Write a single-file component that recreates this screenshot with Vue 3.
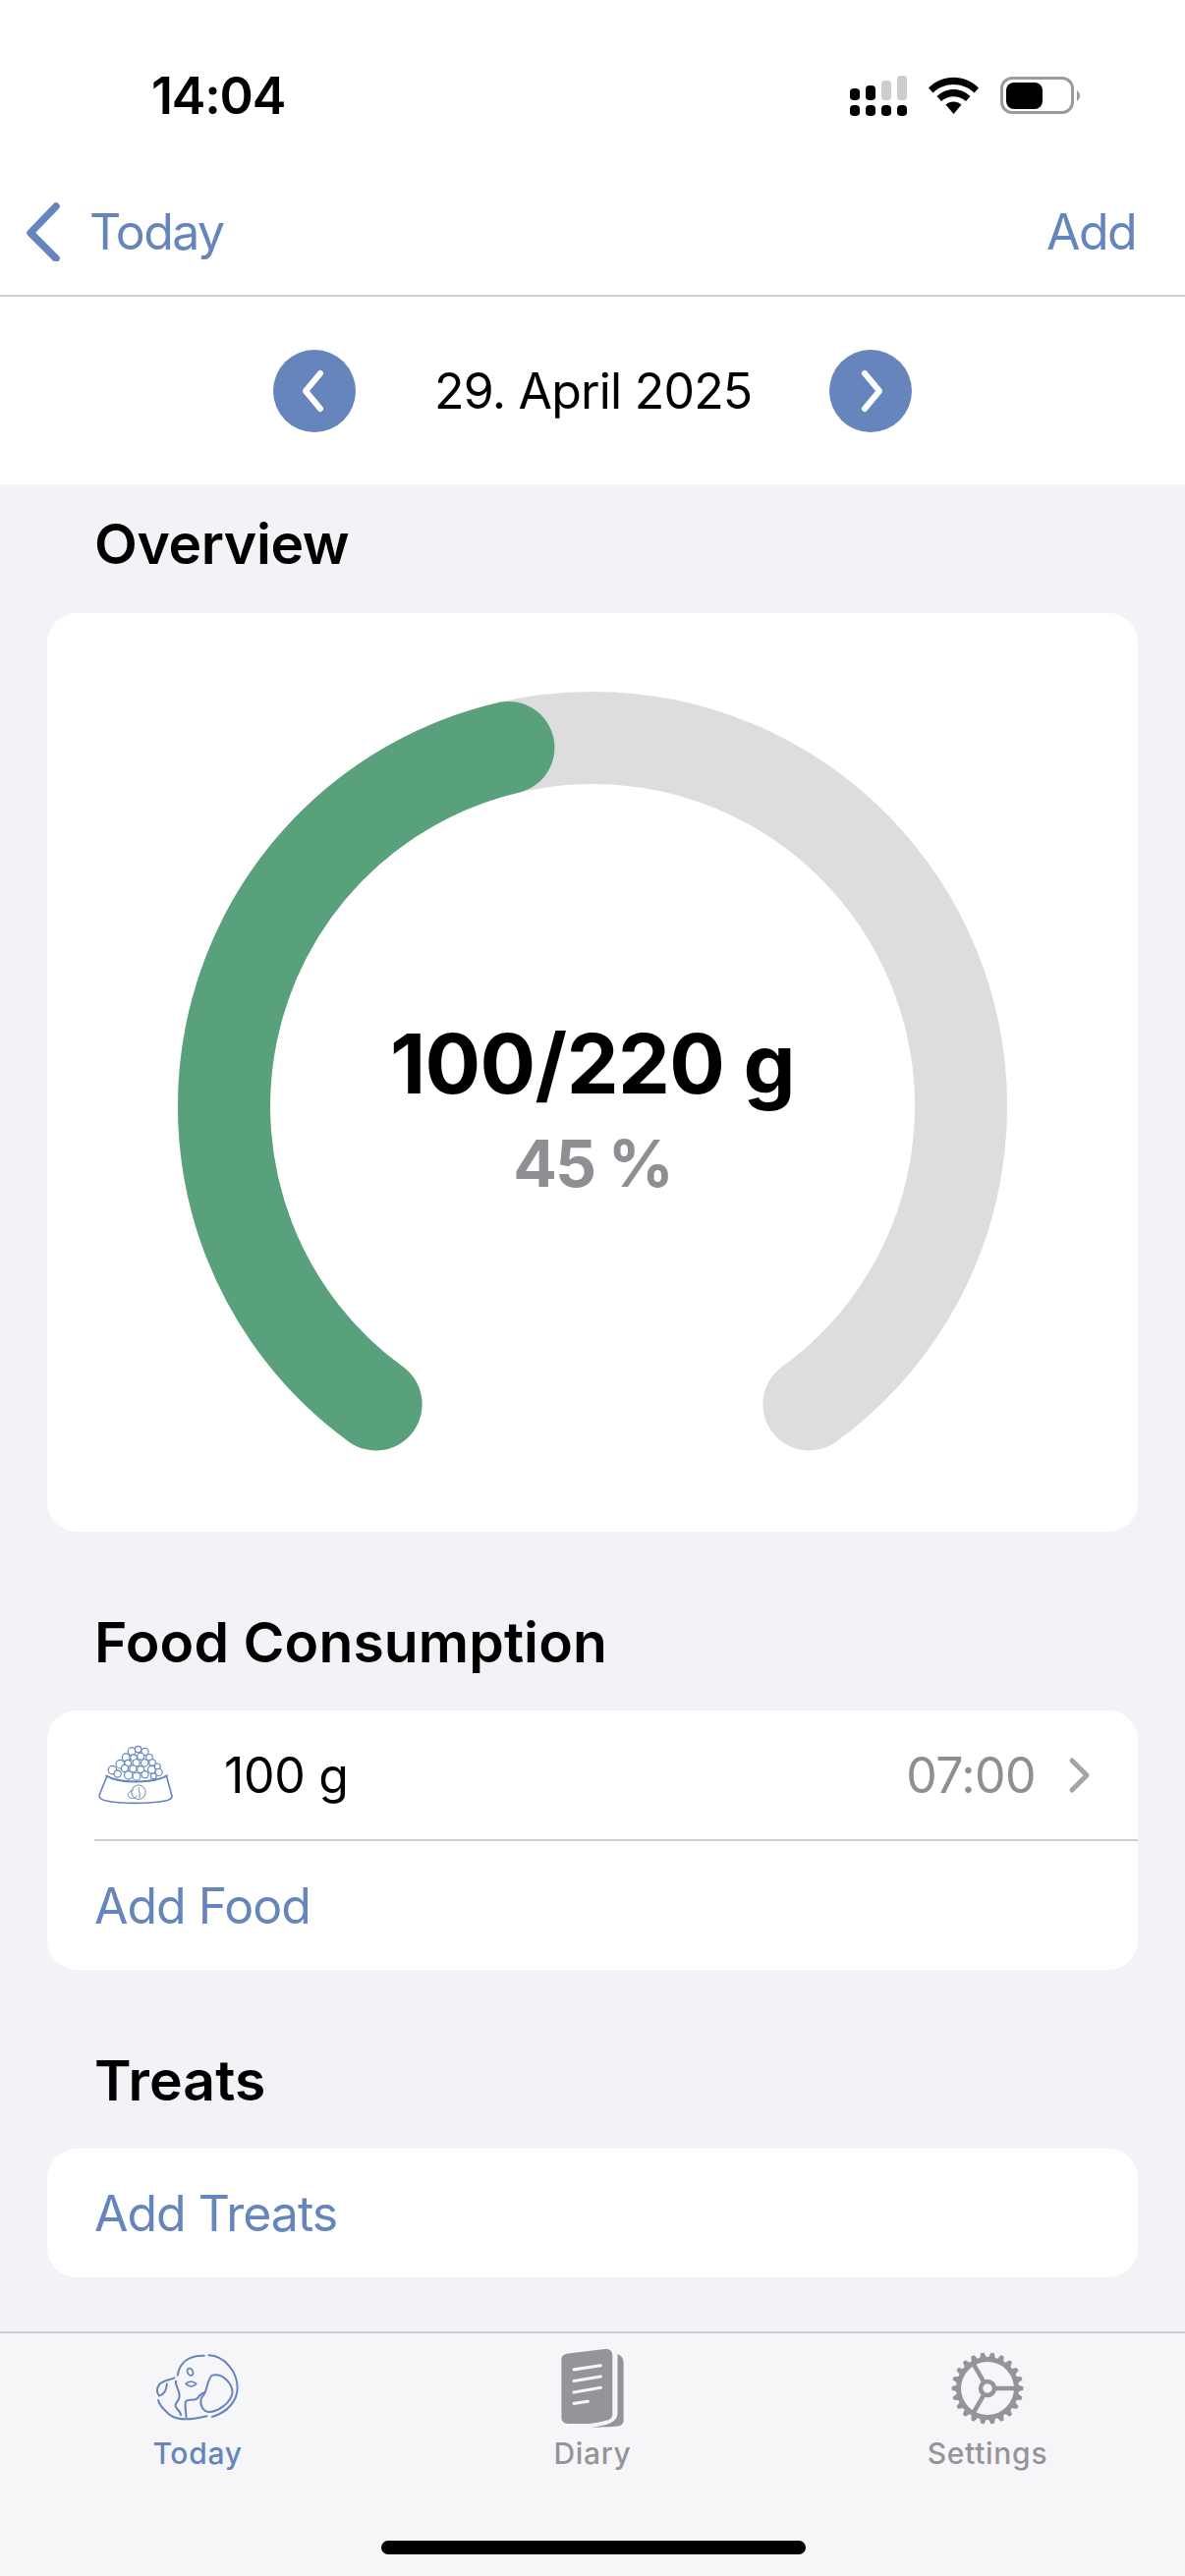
<template>
	<div class="screen">
		<!-- Top white area -->
		<header class="top">
			<div class="status">
				<span class="time">14:04</span>
				<svg class="status-icons" width="240" height="44" viewBox="860 75 240 44">
					<rect v-for="x in [865, 881, 897, 913]" :key="x" :x="x" y="107" width="10" height="11" rx="4" fill="#000" />
					<rect x="865" y="90" width="10" height="12" rx="4" fill="#000" />
					<rect x="881" y="87" width="10" height="15" rx="4" fill="#000" />
					<rect x="897" y="82" width="10" height="20" rx="3.500" fill="#cdcdcd" />
					<rect x="913" y="77" width="10" height="25" rx="3.500" fill="#cdcdcd" />
					<path d="M945 89.500C959 75 982 75 996 89.500L991.500 94.500C980 83 961 83 949.500 94.500Z" fill="#000" />
					<path d="M953.500 98C963 88.500 978 88.500 987.500 98L983 103C976 96.500 965 96.500 958 103Z" fill="#000" />
					<path d="M962.500 106.500C967 102.500 974 102.500 978.500 106.500L970.500 116Z" fill="#000" />
					<rect x="1019.500" y="79.500" width="72" height="35" rx="10.500" fill="none" stroke="#9b9b9b" stroke-width="3" />
					<rect x="1024" y="84" width="37" height="27" rx="8" fill="#000" />
					<path d="M1096 92C1100 95 1100 100 1096 103Z" fill="#9b9b9b" />
				</svg>
			</div>
			<nav class="navbar">
				<a class="back">
					<svg width="36" height="60" viewBox="0 0 36 60">
						<path d="M31 4L5 31L31 57" fill="none" stroke="#6685bd" stroke-width="7.500" stroke-linecap="round" stroke-linejoin="round" />
					</svg>
					<span>Today</span>
				</a>
				<a class="add">Add</a>
			</nav>
			<div class="date-row">
				<button class="round-btn">
					<svg width="34" height="48" viewBox="0 0 34 48">
						<path d="M23 6L8 24L23 42" fill="none" stroke="#fff" stroke-width="6" stroke-linecap="round" stroke-linejoin="round" />
					</svg>
				</button>
				<span class="date">29. April 2025</span>
				<button class="round-btn">
					<svg width="34" height="48" viewBox="0 0 34 48">
						<path d="M11 6L26 24L11 42" fill="none" stroke="#fff" stroke-width="6" stroke-linecap="round" stroke-linejoin="round" />
					</svg>
				</button>
			</div>
		</header>

		<!-- Content -->
		<main class="content">
			<h2 class="heading first">Overview</h2>
			<section class="card gauge-card">
				<div class="gauge">
					<svg width="860" height="800" viewBox="-430 -430 860 800">
						<path :d="trackPath" fill="none" stroke="#dddddd" stroke-width="94" stroke-linecap="round" />
						<path :d="valuePath" fill="none" stroke="#58a17c" stroke-width="94" stroke-linecap="round" />
					</svg>
					<div class="gauge-text">
						<div class="gauge-value">100/220 g</div>
						<div class="gauge-percent">45 %</div>
					</div>
				</div>
			</section>

			<h2 class="heading">Food Consumption</h2>
			<section class="card">
				<div class="row food-row">
					<svg class="bowl" width="76" height="61" viewBox="118 113 232 186">
						<circle v-for="(c, i) in kibble" :key="i" :cx="c[0]" :cy="c[1]" :r="c[2]" fill="#fff" stroke="#6685bd" stroke-width="3.500" />
						<path d="M145 210C180 232 290 232 330 210L347 272C347 280 340 284 330 286C270 297 190 297 140 286C128 284 120 278 122 268Z" fill="#fff" stroke="#6685bd" stroke-width="5" stroke-linejoin="round" />
						<path d="M140 208C185 236 290 236 335 206" fill="none" stroke="#6685bd" stroke-width="3.500" />
						<circle cx="243" cy="260" r="22" fill="none" stroke="#6685bd" stroke-width="3" />
						<path d="M228 252C218 258 205 262 212 274C220 282 232 280 240 270M245 245C240 255 252 262 245 278" fill="none" stroke="#6685bd" stroke-width="3" />
					</svg>
					<span class="amount">100 g</span>
					<span class="row-time">07:00</span>
					<svg width="26" height="38" viewBox="0 0 26 38">
						<path d="M5 4L20 19L5 34" fill="none" stroke="#a4a4a8" stroke-width="5" stroke-linecap="round" stroke-linejoin="round" />
					</svg>
				</div>
				<div class="divider"></div>
				<a class="row link">Add Food</a>
			</section>

			<h2 class="heading">Treats</h2>
			<section class="card">
				<a class="row link">Add Treats</a>
			</section>
		</main>

		<!-- Tab bar -->
		<footer class="tabbar">
			<div class="tab active">
				<svg width="88" height="72" viewBox="170 104 260 215">
					<g fill="none" stroke="#6685bd" stroke-width="6" stroke-linecap="round" stroke-linejoin="round">
						<path d="M320 113C285 112 248 125 240 172" />
						<path d="M334 112C380 114 420 160 420 210C420 245 395 282 344 297" />
						<path d="M230 180C215 187 195 188 185 200C175 215 180 228 185 234C197 230 207 218 208 198" />
						<path d="M182 247C185 265 200 275 215 290C235 305 270 310 328 295" />
						<path d="M235 190C232 205 250 220 245 240C240 255 225 260 240 275C245 280 250 285 250 292" />
						<path d="M266 298C266 280 260 265 265 250C275 240 295 255 305 235C310 228 315 225 322 225" />
						<path d="M345 172C375 165 405 195 405 225C400 255 360 285 330 282C310 275 305 250 315 235C330 225 328 180 345 172Z" />
						<ellipse cx="278" cy="162" rx="8" ry="11" transform="rotate(-25 278 162)" stroke-width="5" />
						<path d="M265 198C275 188 288 190 296 198C288 208 275 208 265 198Z" stroke-width="5" />
					</g>
				</svg>
				<span>Today</span>
			</div>
			<div class="tab">
				<svg width="68" height="80" viewBox="150 90 195 240">
					<path d="M155 125C155 113 163 108 175 106L285 93C300 92 307 100 307 112V285C307 297 300 303 290 305C270 310 255 315 235 315H175C162 315 155 308 155 297Z" fill="#949499" />
					<path d="M322 108C335 112 340 122 340 135V305C340 318 330 322 320 323C295 326 265 326 240 325C290 322 322 310 322 285Z" fill="#949499" />
					<g stroke="#f6f6f9" stroke-width="9" stroke-linecap="round">
						<path d="M192 154L272 142" />
						<path d="M192 188L272 175" />
						<path d="M192 222L272 208" />
						<path d="M192 255L234 249" />
					</g>
				</svg>
				<span>Diary</span>
			</div>
			<div class="tab">
				<svg width="78" height="78" viewBox="-39 -39 78 78">
					<path :d="gearPath" fill="#949499" fill-rule="evenodd" />
					<g stroke="#949499" stroke-width="4.500">
						<path d="M7 0H31" />
						<path d="M-3.500 6.060L-15.500 26.850" />
						<path d="M-3.500 -6.060L-15.500 -26.850" />
					</g>
					<circle r="7" fill="none" stroke="#949499" stroke-width="4.500" />
				</svg>
				<span>Settings</span>
			</div>
			<div class="home-bar"></div>
		</footer>
	</div>
</template>

<script setup>
import { computed } from 'vue'

const radius = 375

function point(deg) {
	// 0deg is straight up, clockwise positive
	const a = (deg * Math.PI) / 180
	return `${(radius * Math.sin(a)).toFixed(1)} ${(-radius * Math.cos(a)).toFixed(1)}`
}

function arc(from, to) {
	const large = to - from > 180 ? 1 : 0
	return `M${point(from)}A${radius} ${radius} 0 ${large} 1 ${point(to)}`
}

const trackPath = arc(-144, 144)
const valuePath = arc(-144, -13.200)

const kibble = [
	[222, 133, 12], [242, 127, 10], [263, 134, 11], [204, 152, 12], [228, 153, 10], [250, 149, 11],
	[277, 152, 10], [186, 173, 13], [210, 170, 10], [236, 169, 11], [262, 169, 11], [286, 168, 10],
	[162, 191, 13], [178, 203, 11], [200, 186, 11], [226, 187, 11], [250, 190, 11], [284, 190, 12],
	[302, 180, 9], [306, 198, 11], [212, 207, 13], [237, 211, 12], [263, 205, 11], [290, 210, 9],
]

// Cog outline with the ring cut out of it
const gearPath = computed(() => {
	const teeth = 22
	const step = (Math.PI * 2) / teeth
	const pts = []
	for (let i = 0; i < teeth; i++) {
		const a = i * step
		const at = (r, o) => `${(r * Math.cos(a + o * step)).toFixed(2)} ${(r * Math.sin(a + o * step)).toFixed(2)}`
		pts.push(at(32, -0.36), at(36.500, -0.16), at(36.500, 0.16), at(32, 0.36))
	}
	const outer = 'M' + pts.join('L') + 'Z'
	const r = 27
	const inner = `M${r} 0A${r} ${r} 0 1 0 ${-r} 0A${r} ${r} 0 1 0 ${r} 0Z`
	return outer + inner
})
</script>

<style>
html,
body {
	margin: 0;
	background: #f2f2f7;
}
</style>

<style scoped>
.screen {
	width: 1206px;
	height: 2622px;
	display: flex;
	flex-direction: column;
	background: #f2f2f7;
	font-family: Inter, 'Liberation Sans', sans-serif;
	color: #000;
	overflow: hidden;
}

.top {
	background: #fff;
	height: 493px;
	flex: none;
}

.status {
	height: 190px;
	box-sizing: border-box;
	padding: 66px 0 0 154px;
	display: flex;
	justify-content: space-between;
	align-items: flex-start;
}

.time {
	font-size: 52px;
	font-weight: 600;
	line-height: 64px;
	letter-spacing: -1.2px;
}

.status-icons {
	margin: 9px 106px 0 0;
}

.navbar {
	height: 112px;
	box-sizing: border-box;
	border-bottom: 2px solid #d2d2d4;
	display: flex;
	justify-content: space-between;
	align-items: center;
	padding: 0 50px 18px 26px;
	font-size: 50px;
	color: #6685bd;
	letter-spacing: -1.6px;
}

.back {
	display: flex;
	align-items: center;
	gap: 29px;
}

.date-row {
	height: 191px;
	display: flex;
	justify-content: center;
	align-items: center;
	gap: 80px;
}

.date {
	font-size: 50px;
	letter-spacing: -0.8px;
	width: 322px;
	text-align: center;
	white-space: nowrap;
}

.round-btn {
	width: 84px;
	height: 84px;
	border: 0;
	padding: 0;
	border-radius: 50%;
	background: #6685bd;
	display: flex;
	align-items: center;
	justify-content: center;
}

.content {
	flex: 1;
	padding: 0 48px;
}

.heading {
	margin: 0;
	height: 68px;
	line-height: 68px;
	padding: 79px 0 35px 48px;
	font-size: 57px;
	font-weight: 600;
	letter-spacing: 0.1px;
}

.heading.first {
	padding-top: 27px;
	padding-bottom: 36px;
	letter-spacing: -0.4px;
}

.card {
	background: #fff;
	border-radius: 30px;
}

.gauge-card {
	height: 935px;
	display: flex;
	justify-content: center;
	padding-top: 72px;
	box-sizing: border-box;
}

.gauge {
	position: relative;
	width: 860px;
	height: 800px;
}

.gauge-text {
	position: absolute;
	left: 0;
	right: 0;
	top: 337px;
	text-align: center;
}

.gauge-value {
	font-size: 84px;
	font-weight: 700;
	line-height: 100px;
	letter-spacing: -0.6px;
}

.gauge-percent {
	margin-top: 13px;
	font-size: 66px;
	font-weight: 700;
	line-height: 76px;
	color: #8e8e93;
	letter-spacing: -2px;
}

.row {
	height: 131px;
	display: flex;
	align-items: center;
	box-sizing: border-box;
	padding-left: 48px;
	font-size: 50px;
	letter-spacing: -1px;
}

.food-row {
	padding-right: 46px;
}

.bowl {
	margin-left: 4px;
}

.amount {
	margin-left: 52px;
	flex: 1;
	letter-spacing: -0.3px;
}

.row-time {
	color: #8e8e93;
	margin-right: 32px;
	letter-spacing: -0.6px;
}

.divider {
	height: 2px;
	margin-left: 48px;
	background: #cfcfd1;
}

.link {
	color: #6685bd;
}

.tabbar {
	position: relative;
	height: 249px;
	flex: none;
	box-sizing: border-box;
	background: #f6f6f9;
	border-top: 2px solid #cdcdd0;
	display: flex;
}

.tab {
	flex: 1;
	display: flex;
	flex-direction: column;
	align-items: center;
	justify-content: flex-start;
	padding-top: 15px;
	font-size: 30px;
	font-weight: 500;
	letter-spacing: 0.7px;
	color: #949499;
}

.tab svg {
	height: 82px;
}

.tab span {
	margin-top: 7px;
}

.tab.active {
	color: #6685bd;
}

.home-bar {
	position: absolute;
	left: 388px;
	bottom: 22px;
	width: 432px;
	height: 14px;
	border-radius: 7px;
	background: #000;
}
</style>
